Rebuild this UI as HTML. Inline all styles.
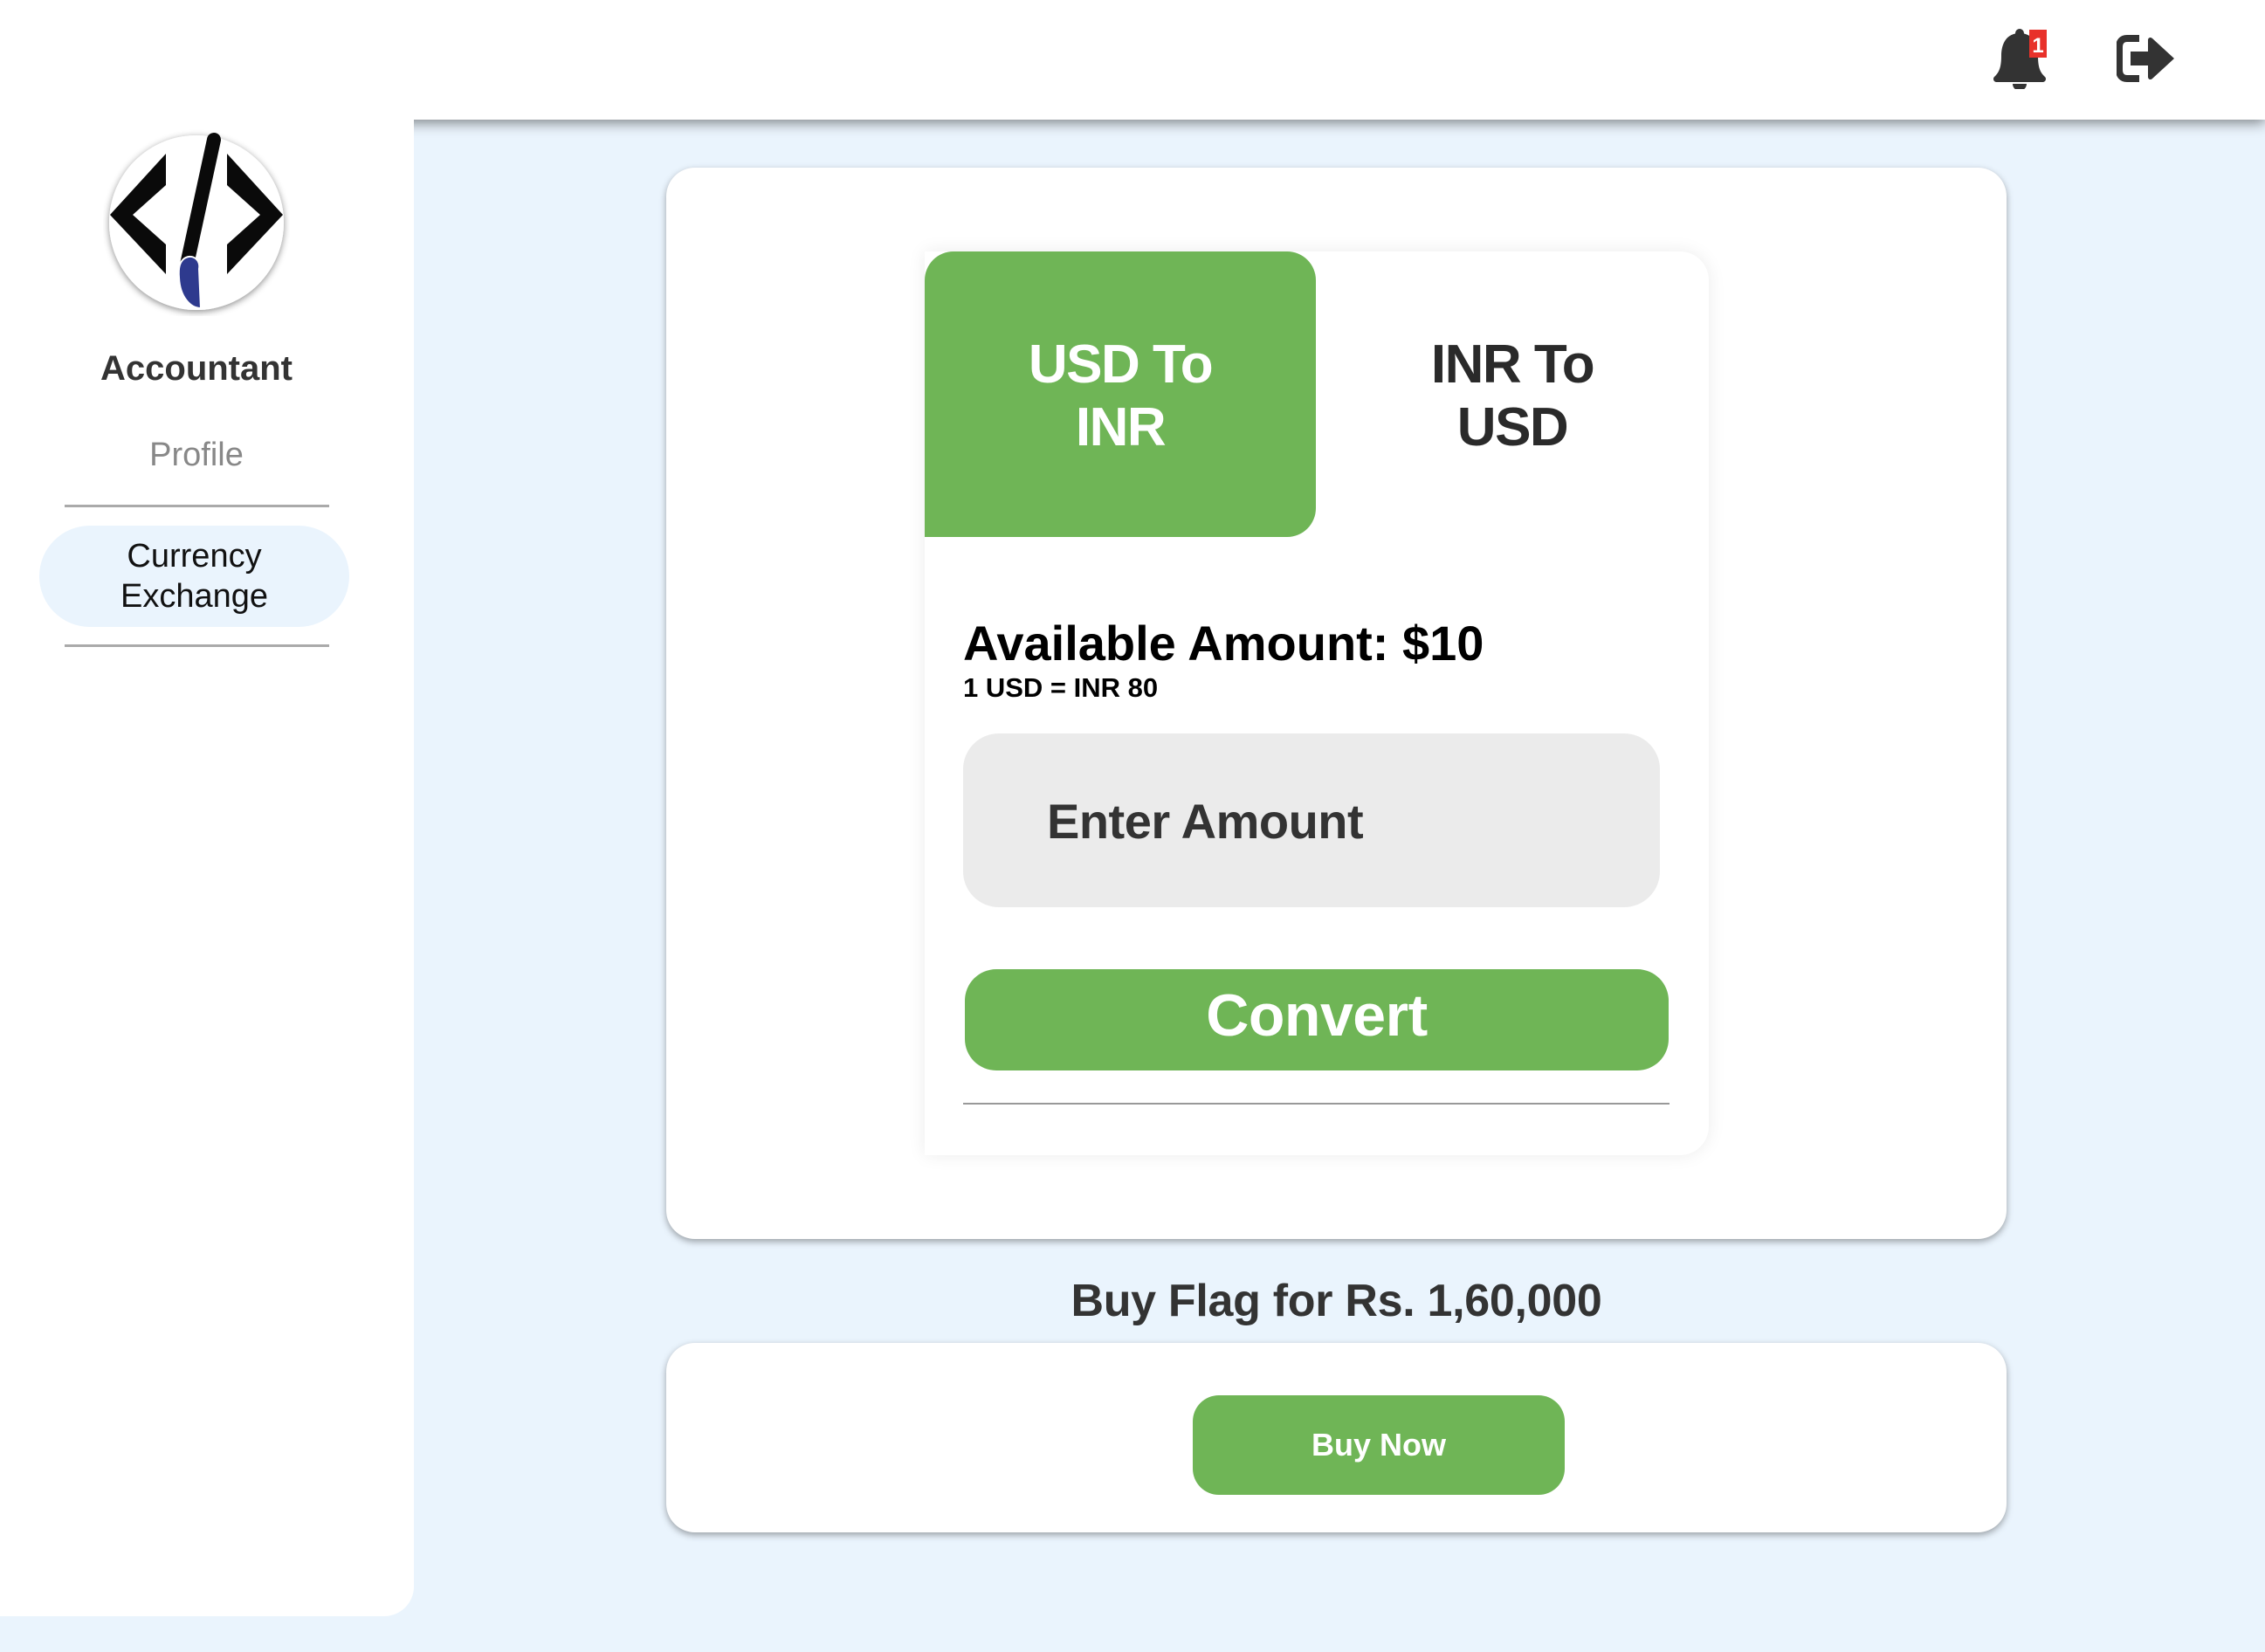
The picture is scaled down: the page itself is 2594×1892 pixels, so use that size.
<!DOCTYPE html>
<html><head><meta charset="utf-8"><style>
*{margin:0;padding:0;box-sizing:border-box}
body{width:2594px;height:1892px;background:#eaf4fd;position:relative;overflow:hidden;font-family:"Liberation Sans",Arial,sans-serif}
.a{position:absolute}
.c{text-align:center}
</style></head><body>
<div class="a" style="left:0;top:0;width:2594px;height:137px;background:#fff;box-shadow:0 4px 14px rgba(0,0,0,.45);z-index:2"></div>
<div class="a" style="left:0;top:0;width:474px;height:1851px;background:#fff;border-bottom-right-radius:34px;z-index:3"></div>
<!-- logo -->
<svg class="a" style="left:118px;top:148px;z-index:4" width="214" height="214" viewBox="0 0 214 214">
<defs><filter id="f" x="-20%" y="-20%" width="140%" height="140%"><feDropShadow dx="0" dy="2" stdDeviation="4" flood-opacity=".45"/></filter></defs>
<circle cx="107" cy="107" r="100" fill="#fff" filter="url(#f)"/>
<polygon points="72,28 72,64 34,98 72,132 72,166 8,98" fill="#0a0a0a"/>
<polygon points="142,28 142,64 180,98 142,132 142,166 206,98" fill="#0a0a0a"/>
<line x1="127" y1="12" x2="96" y2="155" stroke="#0a0a0a" stroke-width="16" stroke-linecap="round"/>
<path d="M93,148 C103,142 112,150 110,160 L112,205 C100,205 88,192 87,170 C86,158 88,152 93,148 Z" fill="#2e3a8e" stroke="#fff" stroke-width="2"/>
</svg>
<div class="a c" style="left:0;width:450px;top:400px;font-size:40px;font-weight:bold;color:#333;z-index:4">Accountant</div>
<div class="a c" style="left:0;width:450px;top:500px;font-size:38px;color:#888;z-index:4">Profile</div>
<div class="a" style="left:74px;top:578px;width:303px;height:3px;background:#aaa;z-index:4"></div>
<div class="a c" style="left:45px;top:602px;width:355px;height:116px;border-radius:58px;background:#eaf4fd;font-size:38px;line-height:46px;padding-top:12px;color:#111;z-index:4">Currency<br>Exchange</div>
<div class="a" style="left:74px;top:738px;width:303px;height:3px;background:#aaa;z-index:4"></div>
<!-- icons -->
<svg class="a" style="left:2280px;top:30px;z-index:4" width="80" height="72" viewBox="0 0 80 72">
<circle cx="33" cy="8" r="5" fill="#333"/>
<path d="M33,8 C18,8 12,20 12,34 C12,50 8,54 4,58 C2,60 3,64 7,64 L59,64 C63,64 64,60 62,58 C58,54 54,50 54,34 C54,20 48,8 33,8 Z" fill="#333"/>
<path d="M25,66 A8,8 0 0 0 41,66 Z" fill="#333"/>
<rect x="44" y="4" width="20" height="32" fill="#e8312a"/>
<text x="54" y="30" font-size="24" font-weight="bold" fill="#fff" text-anchor="middle" font-family="Liberation Sans,sans-serif">1</text>
</svg>
<svg class="a" style="left:2424px;top:40px;z-index:4" width="70" height="54" viewBox="0 0 70 54">
<path d="M26,4 L12,4 C6,4 3,8 3,14 L3,40 C3,46 6,50 12,50 L26,50" fill="none" stroke="#333" stroke-width="8"/>
<path d="M16,19 L36,19 L36,6 C36,3 39,2 41,4 L66,27 L41,50 C39,52 36,51 36,48 L36,35 L16,35 Z" fill="#333"/>
</svg>
<!-- main card -->
<div class="a" style="left:763px;top:192px;width:1535px;height:1227px;background:#fff;border-radius:33px;box-shadow:0 3px 8px rgba(0,0,0,.35)"></div>
<div class="a" style="left:1059px;top:288px;width:898px;height:1035px;background:#fff;border-radius:33px;border-top-left-radius:0;border-bottom-left-radius:0;box-shadow:0 0 20px rgba(0,0,0,.08)"></div>
<div class="a c" style="left:1059px;top:288px;width:448px;height:327px;background:#6fb556;border-radius:33px 33px 33px 0;color:#fff;font-size:62px;font-weight:bold;line-height:72px;padding-top:94px;letter-spacing:-1.5px">USD To<br>INR</div>
<div class="a c" style="left:1507px;top:288px;width:450px;color:#2a2a2a;font-size:62px;font-weight:bold;line-height:72px;padding-top:94px;letter-spacing:-1.5px">INR To<br>USD</div>
<div class="a" style="left:1103px;top:704px;font-size:56px;font-weight:bold;color:#000">Available Amount: $10</div>
<div class="a" style="left:1103px;top:770px;font-size:31px;font-weight:bold;color:#000">1 USD = INR 80</div>
<div class="a" style="left:1103px;top:840px;width:798px;height:199px;background:#ebebeb;border-radius:41px"></div>
<div class="a" style="left:1199px;top:908px;font-size:56px;font-weight:bold;color:#333;letter-spacing:-0.5px">Enter Amount</div>
<div class="a c" style="left:1105px;top:1105px;width:806px;height:116px;background:transparent;color:#fff;font-size:68px;font-weight:bold;line-height:116px;z-index:2;letter-spacing:-0.5px">Convert</div>
<div class="a" style="left:1105px;top:1110px;width:806px;height:116px;background:#6fb556;border-radius:36px"></div>
<div class="a" style="left:1103px;top:1263px;width:809px;height:2px;background:#999"></div>
<div class="a c" style="left:763px;width:1535px;top:1460px;font-size:52px;font-weight:bold;color:#333;letter-spacing:-0.3px">Buy Flag for Rs. 1,60,000</div>
<div class="a" style="left:763px;top:1538px;width:1535px;height:217px;background:#fff;border-radius:33px;box-shadow:0 3px 8px rgba(0,0,0,.35)"></div>
<div class="a c" style="left:1366px;top:1598px;width:426px;height:114px;background:#6fb556;border-radius:30px;color:#fff;font-size:36px;font-weight:bold;line-height:114px">Buy Now</div>
</body></html>
